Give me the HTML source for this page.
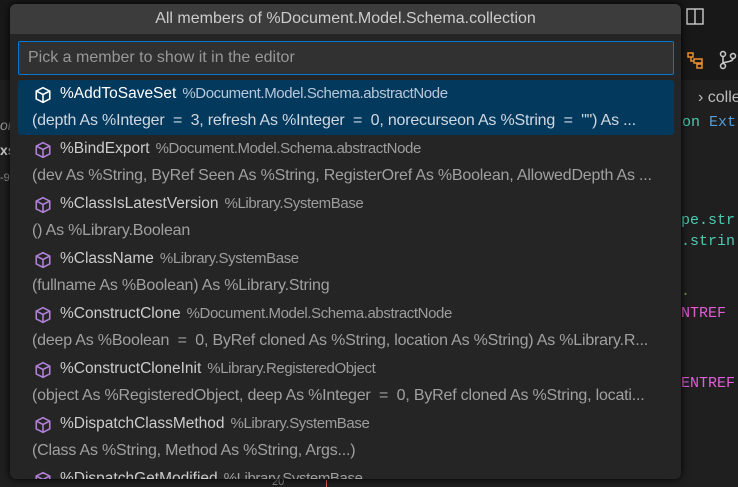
<!DOCTYPE html>
<html><head><style>
html,body{margin:0;width:738px;height:487px;overflow:hidden}
body{background:#1f1f1f;position:relative;font-family:"Liberation Sans",sans-serif}
.a{position:absolute;white-space:nowrap}
.code{font-family:"Liberation Mono",monospace;font-size:15px}
#w{position:absolute;left:10px;top:4px;width:671px;height:475px;background:#252526;border-radius:6px;overflow:hidden;box-shadow:0 0 8px #000}
#title{height:30px;background:#3c3c3c;color:#ccc;font-size:16px;text-align:center;line-height:30px}
#inp{position:absolute;left:8px;top:37px;border:1px solid #0078d4;background:#313131;border-radius:2px;color:#989898;font-size:16px;line-height:32px;padding-left:9px;box-sizing:border-box;width:656px;height:34px}
.it{position:absolute;left:8px;width:656px;height:55px;overflow:hidden}
.sel{background:#04395e;border-radius:3px}
.n{position:absolute;left:42px;top:5px;font-size:15.5px;color:#ccc}
.n span{font-size:15px;color:#9d9d9d;margin-left:6px;letter-spacing:-0.4px}
.sel .n span{color:#b8c8d8}
.sel .n{color:#fff}
.d{position:absolute;left:14px;top:32px;font-size:16px;color:#a0a0a0;letter-spacing:-0.2px}
.sel .d{color:#d0d8e0}
.ic{position:absolute;left:16px;top:6px}
</style></head><body>
<div class="a" style="left:0;top:0;width:738px;height:36px;background:#181818"></div>
<div class="a" style="left:0;top:36px;width:738px;height:44px;background:#181818"></div>
<div class="a" style="left:0;top:80px;width:738px;height:30px;background:#1f1f1f"></div>
<svg class="a" style="left:686px;top:8px" width="18" height="18"><rect x="1" y="1" width="16" height="15" fill="none" stroke="#ccc" stroke-width="1.4"/><line x1="9" y1="1" x2="9" y2="16" stroke="#ccc" stroke-width="1.4"/></svg>
<svg class="a" style="left:686px;top:50px" width="20" height="20"><g fill="none" stroke="#e8912d" stroke-width="1.5"><rect x="2" y="3" width="5" height="4"/><rect x="8" y="9" width="8" height="4"/><rect x="11" y="14" width="5" height="4"/><path d="M5 7v4h3M12 13v1"/></g></svg>
<svg class="a" style="left:718px;top:50px" width="20" height="20"><g fill="none" stroke="#ccc" stroke-width="1.5"><circle cx="5" cy="4" r="2.5"/><circle cx="5" cy="16" r="2.5"/><circle cx="15" cy="6" r="2.5"/><path d="M5 6.5v7M15 8.5c0 4-10 3-10 5"/></g></svg>
<div class="a" style="left:698px;top:89px;color:#bbb;font-size:16px">› collect</div>
<div class="a code" style="left:682px;top:114px;color:#4ec9b0">on <span style="color:#569cd6">Ext</span></div>
<div class="a code" style="left:681px;top:212px;color:#4ec9b0">pe.str</div>
<div class="a code" style="left:681px;top:233px;color:#4ec9b0">.strin</div>
<div class="a code" style="left:681px;top:283px;color:#6a9955">.</div>
<div class="a code" style="left:681px;top:305px;color:#e25cd5">NTREF</div>
<div class="a code" style="left:681px;top:375px;color:#e25cd5">ENTREF</div>
<div class="a" style="left:0;top:117px;color:#999;font-style:italic;font-size:14px">on</div>
<div class="a" style="left:0;top:142px;color:#ccc;font-size:14px;font-weight:bold">xs</div>
<div class="a" style="left:0;top:172px;color:#999;font-size:11px">-9</div>
<div class="a" style="left:272px;top:476px;color:#888;font-size:11px">20</div>
<div class="a" style="left:326px;top:480px;width:1px;height:7px;background:#e06060"></div>
<div id="w">
<div id="title">All members of %Document.Model.Schema.collection</div>
<div id="inp">Pick a member to show it in the editor</div>
<div class="it sel" style="top:76px"><svg class="ic" width="18" height="18" viewBox="0 0 16 16"><path d="M8 1.5l6 3v7l-6 3-6-3v-7zM2 4.5l6 3 6-3M8 7.5v7" fill="none" stroke="#fff" stroke-width="1.4"/></svg><div class="n">%AddToSaveSet<span>%Document.Model.Schema.abstractNode</span></div><div class="d">(depth As %Integer&nbsp; =&nbsp; 3, refresh As %Integer&nbsp; =&nbsp; 0, norecurseon As %String&nbsp; =&nbsp; "") As ...</div></div>
<div class="it" style="top:131px"><svg class="ic" width="18" height="18" viewBox="0 0 16 16"><path d="M8 1.5l6 3v7l-6 3-6-3v-7zM2 4.5l6 3 6-3M8 7.5v7" fill="none" stroke="#b180d7" stroke-width="1.4"/></svg><div class="n">%BindExport<span>%Document.Model.Schema.abstractNode</span></div><div class="d">(dev As %String, ByRef Seen As %String, RegisterOref As %Boolean, AllowedDepth As ...</div></div>
<div class="it" style="top:186px"><svg class="ic" width="18" height="18" viewBox="0 0 16 16"><path d="M8 1.5l6 3v7l-6 3-6-3v-7zM2 4.5l6 3 6-3M8 7.5v7" fill="none" stroke="#b180d7" stroke-width="1.4"/></svg><div class="n">%ClassIsLatestVersion<span>%Library.SystemBase</span></div><div class="d">() As %Library.Boolean</div></div>
<div class="it" style="top:241px"><svg class="ic" width="18" height="18" viewBox="0 0 16 16"><path d="M8 1.5l6 3v7l-6 3-6-3v-7zM2 4.5l6 3 6-3M8 7.5v7" fill="none" stroke="#b180d7" stroke-width="1.4"/></svg><div class="n">%ClassName<span>%Library.SystemBase</span></div><div class="d">(fullname As %Boolean) As %Library.String</div></div>
<div class="it" style="top:296px"><svg class="ic" width="18" height="18" viewBox="0 0 16 16"><path d="M8 1.5l6 3v7l-6 3-6-3v-7zM2 4.5l6 3 6-3M8 7.5v7" fill="none" stroke="#b180d7" stroke-width="1.4"/></svg><div class="n">%ConstructClone<span>%Document.Model.Schema.abstractNode</span></div><div class="d">(deep As %Boolean&nbsp; =&nbsp; 0, ByRef cloned As %String, location As %String) As %Library.R...</div></div>
<div class="it" style="top:351px"><svg class="ic" width="18" height="18" viewBox="0 0 16 16"><path d="M8 1.5l6 3v7l-6 3-6-3v-7zM2 4.5l6 3 6-3M8 7.5v7" fill="none" stroke="#b180d7" stroke-width="1.4"/></svg><div class="n">%ConstructCloneInit<span>%Library.RegisteredObject</span></div><div class="d">(object As %RegisteredObject, deep As %Integer&nbsp; =&nbsp; 0, ByRef cloned As %String, locati...</div></div>
<div class="it" style="top:406px"><svg class="ic" width="18" height="18" viewBox="0 0 16 16"><path d="M8 1.5l6 3v7l-6 3-6-3v-7zM2 4.5l6 3 6-3M8 7.5v7" fill="none" stroke="#b180d7" stroke-width="1.4"/></svg><div class="n">%DispatchClassMethod<span>%Library.SystemBase</span></div><div class="d">(Class As %String, Method As %String, Args...)</div></div>
<div class="it" style="top:461px;height:14px"><svg class="ic" width="18" height="18" viewBox="0 0 16 16"><path d="M8 1.5l6 3v7l-6 3-6-3v-7zM2 4.5l6 3 6-3M8 7.5v7" fill="none" stroke="#b180d7" stroke-width="1.4"/></svg><div class="n">%DispatchGetModified<span>%Library.SystemBase</span></div></div>
</div>
</body></html>
